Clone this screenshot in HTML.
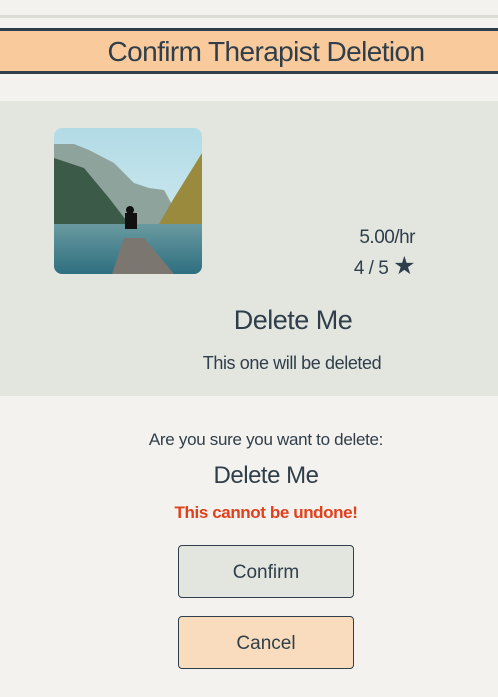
<!DOCTYPE html>
<html><head><style>
body{margin:0;width:498px;height:697px;background:#f4f2ee;font-family:"Liberation Sans",sans-serif;color:#2f3e4a;position:relative;overflow:hidden}
.a{position:absolute;white-space:nowrap}
.c{transform:translateX(-50%)}
</style></head><body>
<div class="a" style="left:0;top:15px;width:498px;height:3px;background:#dcdcd6"></div>
<div class="a" style="left:0;top:28px;width:498px;height:40px;background:#f8ca9c;border-top:3px solid #2f3e4a;border-bottom:3px solid #2f3e4a"></div>
<div class="a c" style="left:266px;top:34px;font-size:28px;line-height:36px;letter-spacing:-0.6px">Confirm Therapist Deletion</div>
<div class="a" style="left:0;top:101px;width:498px;height:295px;background:#e3e6df"></div>
<svg class="a" style="left:54px;top:128px" width="148" height="146" viewBox="0 0 148 146">
<defs><clipPath id="r"><rect width="148" height="146" rx="8"/></clipPath>
<linearGradient id="s" x1="0" y1="0" x2="0" y2="1"><stop offset="0" stop-color="#b2dbe6"/><stop offset="1" stop-color="#d9eef2"/></linearGradient>
<linearGradient id="w" x1="0" y1="0" x2="0" y2="1"><stop offset="0" stop-color="#6a9aa0"/><stop offset="1" stop-color="#2e6f80"/></linearGradient></defs>
<g clip-path="url(#r)">
<rect width="148" height="146" fill="url(#s)"/>
<path d="M0 16 L20 16 L35 22 L60 35 L80 55 L95 60 L110 62 L120 80 L115 96 L0 96Z" fill="#8fa39d"/>
<path d="M0 30 L30 40 L55 70 L75 96 L0 96Z" fill="#3b5a47"/>
<path d="M148 25 L148 96 L105 96 L120 70 Z" fill="#9a8a3e"/>
<rect y="96" width="148" height="50" fill="url(#w)"/>
<path d="M58 146 L70 110 L90 110 L120 146Z" fill="#7b7770"/>
<rect x="71" y="85" width="12" height="16" fill="#111"/><circle cx="76" cy="82" r="4" fill="#111"/>
</g></svg>
<div class="a" style="right:83px;top:227px;font-size:19px;letter-spacing:-0.5px">5.00/hr</div>
<div class="a" style="right:83px;top:257px;font-size:19px;letter-spacing:-0.5px">4 / 5 <span style="font-size:25px;line-height:19px">★</span></div>
<div class="a c" style="left:293px;top:305px;font-size:27px;letter-spacing:-0.5px">Delete Me</div>
<div class="a c" style="left:292px;top:353px;font-size:18px;letter-spacing:-0.4px">This one will be deleted</div>
<div class="a c" style="left:266px;top:430px;font-size:17px;letter-spacing:-0.3px">Are you sure you want to delete:</div>
<div class="a c" style="left:266px;top:462px;font-size:24px;letter-spacing:-0.5px">Delete Me</div>
<div class="a c" style="left:266px;top:503px;font-size:17px;font-weight:bold;color:#e0401c;letter-spacing:-0.4px">This cannot be undone!</div>
<div class="a" style="left:178px;top:545px;width:174px;height:51px;background:#e3e6df;border:1px solid #2f3e4a;border-radius:4px;text-align:center;line-height:53px;font-size:19px">Confirm</div>
<div class="a" style="left:178px;top:616px;width:174px;height:51px;background:#f8dcbd;border:1px solid #2f3e4a;border-radius:4px;text-align:center;line-height:53px;font-size:19px">Cancel</div>
</body></html>
